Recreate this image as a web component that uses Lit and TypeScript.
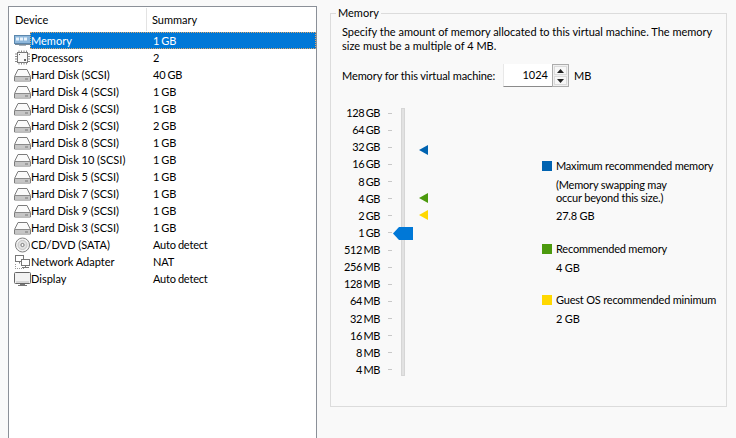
import {LitElement, html, css, svg} from 'lit';
import {customElement} from 'lit/decorators.js';

type Kind = 'mem' | 'cpu' | 'disk' | 'cd' | 'net' | 'display';

const devices: [Kind, string, string][] = [
  ['mem', 'Memory', '1 GB'],
  ['cpu', 'Processors', '2'],
  ['disk', 'Hard Disk (SCSI)', '40 GB'],
  ['disk', 'Hard Disk 4 (SCSI)', '1 GB'],
  ['disk', 'Hard Disk 6 (SCSI)', '1 GB'],
  ['disk', 'Hard Disk 2 (SCSI)', '2 GB'],
  ['disk', 'Hard Disk 8 (SCSI)', '1 GB'],
  ['disk', 'Hard Disk 10 (SCSI)', '1 GB'],
  ['disk', 'Hard Disk 5 (SCSI)', '1 GB'],
  ['disk', 'Hard Disk 7 (SCSI)', '1 GB'],
  ['disk', 'Hard Disk 9 (SCSI)', '1 GB'],
  ['disk', 'Hard Disk 3 (SCSI)', '1 GB'],
  ['cd', 'CD/DVD (SATA)', 'Auto detect'],
  ['net', 'Network Adapter', 'NAT'],
  ['display', 'Display', 'Auto detect'],
];

const scale = ['128 GB', '64 GB', '32 GB', '16 GB', '8 GB', '4 GB', '2 GB', '1 GB', '512 MB', '256 MB', '128 MB', '64 MB', '32 MB', '16 MB', '8 MB', '4 MB'];

const icons: Record<Kind, unknown> = {
  mem: svg`<rect x="0.5" y="2.5" width="16" height="8" fill="#8fb8dc" stroke="#5b87ad"/>
    <path d="M2 4.5h3v3H2zM6 4.5h3v3H6zM10 4.5h3v3h-3z" fill="#eaf3fb"/>
    <path d="M1 11.5h15" stroke="#7a8a98"/><path d="M5 12.5h7" stroke="#a8b4be"/>`,
  cpu: svg`<rect x="3.5" y="2.5" width="10" height="10" fill="#fafafa" stroke="#777"/>
    <path d="M5 0.5v2M7.5 0.5v2M10 0.5v2M12.500 0.5v2M5 12.5v2M7.5 12.5v2M10 12.5v2M12.500 12.5v2M1 4h2.500M1 6.5h2.500M1 9h2.500M1 11.5h2.500M13.5 4H16M13.5 6.5H16M13.5 9H16M13.5 11.5H16" stroke="#8a8a8a"/>
    <path d="M5 4h1v1H5zM10 9h2v2h-2z" fill="#666"/>`,
  disk: svg`<path d="M4 2.500h9l3.500 7v4.500H0.500V9.500z" fill="#fafafa" stroke="#7c7c7c"/>
    <path d="M1 9.500h15" stroke="#8a8a8a"/><rect x="1" y="10" width="15" height="3.500" fill="#c6c6c6"/>
    <path d="M11 12h3" stroke="#777"/>`,
  cd: svg`<circle cx="8.5" cy="8" r="7" fill="#f2f2f2" stroke="#808080"/>
    <circle cx="8.5" cy="8" r="4.500" fill="#e2e2e2" stroke="#c4c4c4"/>
    <circle cx="8.5" cy="8" r="1.600" fill="#fff" stroke="#777"/>`,
  net: svg`<rect x="1.5" y="1.5" width="8" height="6" fill="#fff" stroke="#777"/>
    <rect x="7.5" y="5.5" width="8" height="6" fill="#fff" stroke="#777"/>
    <path d="M5.500 7.500v2M11.500 11.500v2M8 13.500h7" stroke="#777"/>
    <path d="M1 14.500h9M1.500 10v4" stroke="#999" stroke-dasharray="1 1"/>`,
  display: svg`<rect x="0.5" y="1.5" width="16" height="11" rx="1" fill="#f2f2f2" stroke="#666"/>
    <path d="M2 11h13" stroke="#bbb"/><path d="M6 13.500h5M4 14.500h9" stroke="#777"/>`,
};

@customElement('app-root')
export class AppRoot extends LitElement {
  static styles = css`
    :host {
      display: block;
      width: 736px;
      height: 438px;
      overflow: hidden;
      background: #f9f9f9;
      color: #000;
      font-family: Lato, Roboto, sans-serif;
      font-size: 11px;
      line-height: 14px;
    }
    .wrap {
      display: flex;
      height: 100%;
      padding: 6px 0 0 8px;
      box-sizing: border-box;
    }
    .list {
      width: 309px;
      flex: none;
      box-sizing: border-box;
      background: #fff;
      border: 1px solid #8b9098;
      border-bottom: none;
      padding-top: 1px;
    }
    .head {
      display: grid;
      grid-template-columns: 131px 1fr;
      height: 24px;
      align-items: center;
      padding-left: 6px;
    }
    .head span + span {
      border-left: 1px solid #e3e3e3;
      padding-left: 5px;
      height: 23px;
      line-height: 23px;
      margin-bottom: 1px;
    }
    .row {
      display: grid;
      grid-template-columns: 16px 123px 1fr;
      height: 17px;
      align-items: center;
      padding-left: 5px;
    }
    .row svg {
      width: 17px;
      height: 16px;
      display: block;
    }
    .row .name {
      padding-left: 1px;
      white-space: nowrap;
    }
    .row .val {
      letter-spacing: -0.2px;
      word-spacing: -0.5px;
    }
    .sel {
      position: relative;
    }
    .sel .band {
      position: absolute;
      inset: 0 0 0 21px;
      background: #0078d7;
      outline: 1px dotted #e0a868;
      outline-offset: -1px;
    }
    .sel .name, .sel .val {
      position: relative;
      color: #fff;
    }
    .side {
      flex: 1;
      padding: 0 9px 31px 13px;
      min-width: 0;
    }
    fieldset {
      box-sizing: border-box;
      height: 100%;
      min-width: 0;
      margin: 0;
      border: 1px solid #dcdcdc;
      padding: 5px 10px 0 11px;
    }
    legend {
      padding: 0 2px;
      margin-left: -6px;
    }
    .desc {
      margin: 0;
    }
    .amount {
      display: flex;
      align-items: center;
      margin-top: 11px;
      height: 23px;
    }
    .amount label {
      width: 161px;
      flex: none;
      white-space: nowrap;
      letter-spacing: -0.1px;
    }
    .input {
      width: 49px;
      height: 23px;
      box-sizing: border-box;
      background: #fff;
      border-bottom: 1px solid #8b8b8b;
      border-left: 1px solid #e8e8e8;
      text-align: right;
      padding: 0 4px 2px 0;
      line-height: 21px;
    }
    .spin {
      width: 17px;
      height: 23px;
      box-sizing: border-box;
      border: 1px solid #acacac;
      display: flex;
      flex-direction: column;
      gap: 1px;
      padding: 1px;
      background: #f0f0f0;
    }
    .spin span {
      flex: 1;
      display: flex;
      align-items: center;
      justify-content: center;
      background: #f7f7f7;
      border: 1px solid #dadada;
    }
    .spin svg {
      width: 7px;
      height: 4px;
      display: block;
    }
    .unit {
      margin-left: 5px;
    }
    .body {
      display: flex;
      margin-top: 17.5px;
    }
    .scale {
      width: 47px;
      flex: none;
      margin-left: -9px;
    }
    .tick {
      display: flex;
      justify-content: flex-end;
      align-items: center;
      height: 17.13px;
      white-space: nowrap;
      word-spacing: -1px;
      letter-spacing: -0.4px;
    }
    .tick i {
      display: block;
      width: 4px;
      height: 1px;
      background: #c8c8c8;
      margin-left: 8px;
      margin-right: -12px;
    }
    .slider {
      position: relative;
      width: 4px;
      height: 268px;
      margin-left: 21px;
      margin-top: 3.5px;
      flex: none;
      background: #e2e2e2;
      border: 1px solid #d6d6d6;
      box-sizing: border-box;
    }
    .slider svg {
      position: absolute;
      display: block;
    }
    .legend {
      margin-left: 137px;
      margin-top: 54px;
      flex: none;
      white-space: nowrap;
      letter-spacing: -0.2px;
    }
    .legend h4 {
      margin: 0;
      font: inherit;
      display: flex;
      align-items: center;
    }
    .legend h4 b {
      display: block;
      width: 10px;
      height: 10px;
      margin-right: 4px;
    }
    .legend p {
      margin: 5px 0 0 14px;
    }
    .legend p.note {
      line-height: 13px;
    }
    .legend .group + .group {
      margin-top: 18px;
    }
    .legend .group:first-child + .group {
      margin-top: 19px;
    }
    .blue { background: #0063b1; }
    .green { background: #4c9a0e; }
    .yellow { background: #ffd800; }
  `;

  render() {
    return html`
      <div class="wrap">
        <div class="list">
          <div class="head"><span>Device</span><span>Summary</span></div>
          ${devices.map(([kind, name, val], i) => html`
            <div class="row ${i === 0 ? 'sel' : ''}">
              ${i === 0 ? html`<div class="band"></div>` : ''}
              <svg viewBox="0 0 17 16">${icons[kind]}</svg>
              <span class="name">${name}</span>
              <span class="val">${val}</span>
            </div>`)}
        </div>
        <div class="side">
          <fieldset>
            <legend>Memory</legend>
            <p class="desc">Specify the amount of memory allocated to this virtual machine. The memory size must be a multiple of 4 MB.</p>
            <div class="amount">
              <label>Memory for this virtual machine:</label>
              <div class="input">1024</div>
              <div class="spin">
                <span><svg viewBox="0 0 7 4"><path d="M3.5 0L7 4H0z" fill="#222"/></svg></span>
                <span><svg viewBox="0 0 7 4"><path d="M0 0h7L3.5 4z" fill="#222"/></svg></span>
              </div>
              <span class="unit">MB</span>
            </div>
            <div class="body">
              <div class="scale">
                ${scale.map((s) => html`<div class="tick"><span>${s}</span><i></i></div>`)}
              </div>
              <div class="slider">
                <svg style="left:17px;top:36px" width="10" height="10" viewBox="0 0 10 10"><path d="M0 5L9 0v10z" fill="#0063b1"/></svg>
                <svg style="left:17px;top:84px" width="10" height="10" viewBox="0 0 10 10"><path d="M0 5L9 0v10z" fill="#4c9a0e"/></svg>
                <svg style="left:17px;top:101px" width="10" height="10" viewBox="0 0 10 10"><path d="M0 5L9 0v10z" fill="#ffd800"/></svg>
                <svg style="left:-9px;top:118px" width="20" height="13" viewBox="0 0 20 13"><path d="M0 6.5L6 0h14v13H6z" fill="#0078d7"/></svg>
              </div>
              <div class="legend">
                <div class="group">
                  <h4><b class="blue"></b>Maximum recommended memory</h4>
                  <p class="note">(Memory swapping may<br>occur beyond this size.)</p>
                  <p>27.8 GB</p>
                </div>
                <div class="group">
                  <h4><b class="green"></b>Recommended memory</h4>
                  <p>4 GB</p>
                </div>
                <div class="group">
                  <h4><b class="yellow"></b>Guest OS recommended minimum</h4>
                  <p>2 GB</p>
                </div>
              </div>
            </div>
          </fieldset>
        </div>
      </div>
    `;
  }
}
